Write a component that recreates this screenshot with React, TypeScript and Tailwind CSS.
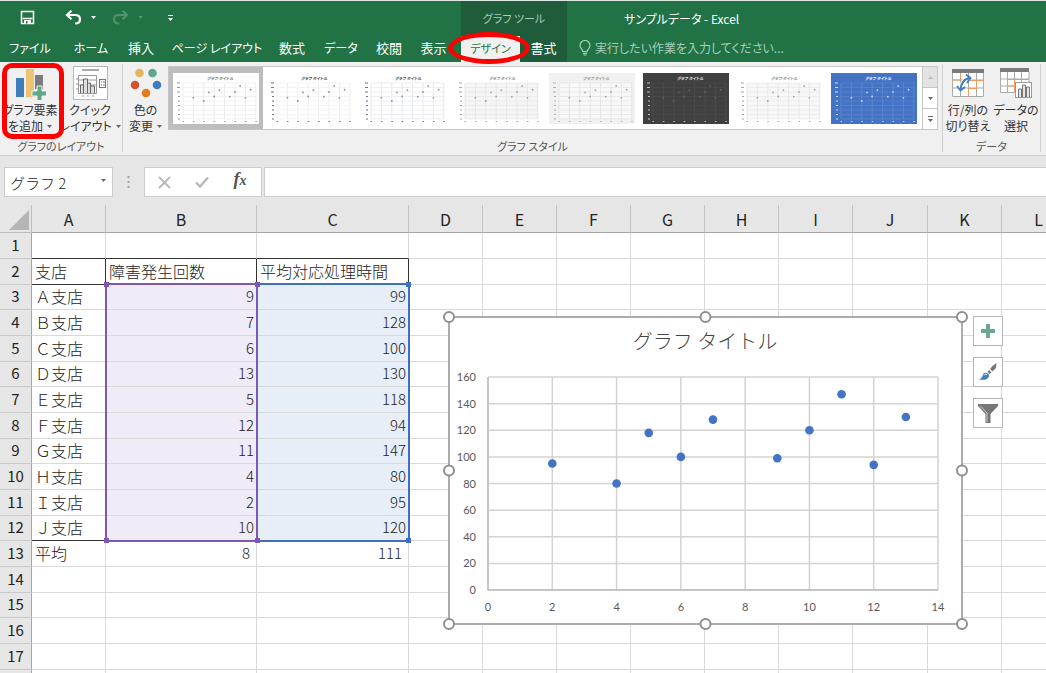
import React from "react";

const branches: [string, number, number][] = [
  ["Ａ支店", 9, 99],
  ["Ｂ支店", 7, 128],
  ["Ｃ支店", 6, 100],
  ["Ｄ支店", 13, 130],
  ["Ｅ支店", 5, 118],
  ["Ｆ支店", 12, 94],
  ["Ｇ支店", 11, 147],
  ["Ｈ支店", 4, 80],
  ["Ｉ支店", 2, 95],
  ["Ｊ支店", 10, 120],
];

const columns = [
  { name: "A", width: "w-[74px]" },
  { name: "B", width: "w-[151px]" },
  { name: "C", width: "w-[152px]" },
  { name: "D", width: "w-[74px]" },
  { name: "E", width: "w-[74px]" },
  { name: "F", width: "w-[74px]" },
  { name: "G", width: "w-[74px]" },
  { name: "H", width: "w-[74px]" },
  { name: "I", width: "w-[74px]" },
  { name: "J", width: "w-[75px]" },
  { name: "K", width: "w-[74px]" },
  { name: "L", width: "w-[74px]" },
];
const rows = Array.from({ length: 17 }, (_, i) => i + 1);

const tabsBefore = [
  { label: "ファイル", style: "w-[60px] text-[12px]" },
  { label: "ホーム", style: "w-[62px] text-[12px]" },
  { label: "挿入", style: "w-[38px] text-[13px]" },
  { label: "ページ レイアウト", style: "w-[114px] text-[12px]" },
  { label: "数式", style: "w-[36px] text-[13px]" },
  { label: "データ", style: "w-[62px] text-[12px]" },
  { label: "校閲", style: "w-[34px] text-[13px]" },
  { label: "表示", style: "w-[55px] text-[13px]" },
];

type ThumbStyle = {
  bg: string;
  plot: string;
  grid: string;
  dot: string;
  text: string;
  selected?: boolean;
};

const thumbs: ThumbStyle[] = [
  { bg: "#ffffff", plot: "#ffffff", grid: "#ececec", dot: "#8b8fa0", text: "#777777", selected: true },
  { bg: "#ffffff", plot: "#ffffff", grid: "#efefef", dot: "#8b8fa0", text: "#444444" },
  { bg: "#ffffff", plot: "#ffffff", grid: "#e6e8f0", dot: "#8f93a8", text: "#3f4666" },
  { bg: "#ffffff", plot: "#f5f5f5", grid: "#e6e6e6", dot: "#a0a0a0", text: "#888888" },
  { bg: "#f1f1f1", plot: "#f8f8f8", grid: "#e4e4e4", dot: "#a0a4b0", text: "#999999" },
  { bg: "#404040", plot: "#404040", grid: "#4a4a4a", dot: "#5c6270", text: "#e8e8e8" },
  { bg: "#ffffff", plot: "#f7f7f7", grid: "#e8e8e8", dot: "#a0a4b0", text: "#888888" },
  { bg: "#4472c4", plot: "#4472c4", grid: "#5b84cd", dot: "#c5d4f0", text: "#ffffff" },
];

function Caret({ className = "" }: { className?: string }) {
  return (
    <svg className={className} width="5" height="3" viewBox="0 0 5 3" aria-hidden="true">
      <path d="M0 0h5L2.5 3z" fill="currentColor" />
    </svg>
  );
}

function StyleThumb({ t, index }: { t: ThumbStyle; index: number }) {
  return (
    <button
      aria-label={`スタイル ${index + 1}`}
      className={`flex w-[94px] shrink-0 items-center justify-center ${t.selected ? "bg-[#bdbdbd]" : "bg-white"}`}
    >
      <svg width="86" height="51" viewBox="0 0 86 51">
        <rect width="86" height="51" fill={t.bg} />
        <rect x="10" y="10" width="73" height="36" fill={t.plot} />
        <g stroke={t.grid} strokeWidth="1">
          {[0, 1, 2, 3, 4, 5, 6, 7, 8].map((i) => (
            <path key={i} d={`M10 ${10 + i * 4.5}H83`} strokeWidth="0.7" />
          ))}
          {[0, 1, 2, 3, 4, 5, 6, 7].map((i) => (
            <path key={i} d={`M${10 + i * 10.4} 10V46`} />
          ))}
        </g>
        <g fill={t.text} opacity="0.75">
          {[0, 1, 2, 3, 4, 5, 6, 7, 8].map((i) => (
            <rect key={i} x={i > 2 ? 5 : 4} y={9.5 + i * 4.5} width={i > 2 ? 2 : 3} height="1" />
          ))}
          {[0, 1, 2, 3, 4, 5, 6, 7].map((i) => (
            <rect key={i} x={9.5 + i * 10.4} y="48" width="1.5" height="1" />
          ))}
        </g>
        <g fill={t.dot}>
          {branches.map(([n, x, y]) => (
            <circle key={n} cx={10 + x * 5.2} cy={46 - y * 0.225} r="0.9" />
          ))}
        </g>
        <text x="47" y="6.5" textAnchor="middle" fontSize="4" fontWeight="700" fontStyle="italic" fill={t.text}>
          グラフ タイトル
        </text>
      </svg>
    </button>
  );
}

function GroupLabel({ children }: { children: React.ReactNode }) {
  return <div className="flex min-h-0 flex-1 items-center justify-center text-[11px] text-[#555]">{children}</div>;
}

function RibbonButton({
  icon,
  first,
  second,
  caret,
  className,
}: {
  icon: React.ReactNode;
  first: string;
  second: string;
  caret?: boolean;
  className: string;
}) {
  return (
    <button className={`flex flex-col items-center whitespace-nowrap text-[12px] leading-4 text-[#333] ${className}`}>
      <span className="flex h-[38px] items-center justify-center">{icon}</span>
      <span>{first}</span>
      <span className="flex items-center gap-1">
        {second}
        {caret && <Caret className="text-[#666]" />}
      </span>
    </button>
  );
}

const AddElementIcon = () => (
  <svg width="32" height="34" viewBox="0 0 32 34">
    <rect x="2" y="12" width="8" height="19" fill="#3f7dbd" />
    <rect x="12" y="3" width="8" height="28" fill="#eec373" />
    <rect x="21" y="9" width="8" height="14" fill="#7b7b7b" />
    <path d="M23 20h5v5h5v5h-5v5h-5v-5h-5v-5h5z" fill="#5fa88b" stroke="#f0f0f0" />
  </svg>
);

const QuickLayoutIcon = () => (
  <svg width="35" height="34" viewBox="0 0 35 34" fill="none">
    <rect x="0.5" y="0.5" width="34" height="33" fill="#fff" stroke="#b5b5b5" />
    <path d="M9 4h17" stroke="#aaa" strokeWidth="2" />
    <path d="M5.5 9.5h18v18h-18zM3 13h2M3 18h2M3 23h2M5.5 14h18M5.5 19h18" stroke="#999" />
    <path d="M7.500 27v-8h3v8M10.500 27V13h4v14M14.500 27V17h3v10M17.500 27V20h4v7" stroke="#666" fill="#ddd" />
    <rect x="26.500" y="13.500" width="6" height="8" stroke="#777" />
    <path d="M28 16h1M30 16h2M28 19h1M30 19h2" stroke="#777" />
    <path d="M9 30h2M14 30h2M19 30h2" stroke="#999" />
  </svg>
);

const ColorsIcon = () => (
  <svg width="32" height="32" viewBox="0 0 32 32">
    <circle cx="9.500" cy="6" r="4.300" fill="#e3b55d" />
    <circle cx="22.500" cy="6" r="4.300" fill="#5fa88b" />
    <circle cx="5" cy="18" r="4.300" fill="#d35230" />
    <circle cx="27" cy="18" r="4.300" fill="#3f7dbd" />
    <circle cx="16" cy="26" r="4.300" fill="#e07b1f" />
  </svg>
);

const SwapIcon = () => (
  <svg width="34" height="30" viewBox="0 0 34 30" fill="none">
    <rect x="1" y="1" width="32" height="28" fill="#fff" />
    <path d="M1.500 5v23.500h31V5M1 12h32M1 20h32M9.500 5v23M17.500 5v23M25.500 5v23" stroke="#aaa" />
    <path d="M9.500 5v7h-8M17.500 20.500h8v-8h7M17.500 12.500h8M17.500 20.500v8" stroke="#ed9a5b" />
    <rect x="1" y="1" width="32" height="4" fill="#7b7b7b" />
    <path d="M9 23c0-6 3-11 10-12" stroke="#fff" strokeWidth="4" />
    <path d="M9.500 22c0-6 3.500-11 9-12" stroke="#3f7dbd" strokeWidth="2" />
    <path d="M6 18l3.500 4.500L14 19M15 6.500l4.500 3.500-3.500 5" stroke="#3f7dbd" strokeWidth="1.800" />
  </svg>
);

const SelectDataIcon = () => (
  <svg width="34" height="32" viewBox="0 0 34 32" fill="none">
    <rect x="1" y="1" width="29" height="25" fill="#fff" />
    <path d="M1.500 5v20.500h28.500V5M1 12h29M1 19h29M8.500 5v20M15.500 5v20M22.500 5v20" stroke="#aaa" />
    <path d="M8.500 25V12.500h21M15.500 12v13M8.500 19h14M22.500 5v13" stroke="#ed9a5b" />
    <rect x="1" y="1" width="29" height="4" fill="#7b7b7b" />
    <rect x="16.500" y="15.500" width="16" height="15" fill="#fff" stroke="#999" />
    <path d="M19.500 30v-8h3v8M23.500 30V18h3v12M27.500 30V20h3v10" stroke="#777" fill="#e5e5e5" />
  </svg>
);

function TitleBar() {
  return (
    <header className="shrink-0 border-t border-[#dbe9e0] bg-[#217346] text-white">
      <div className="flex h-[35px]">
        <div className="flex w-[461px] shrink-0 items-center pb-[2px] pl-[20px]">
          <button aria-label="上書き保存">
            <svg width="15" height="15" viewBox="0 0 15 15" fill="none">
              <path d="M1.500 1.500h12v12h-12z" stroke="#fff" strokeWidth="1.500" />
              <path d="M2.500 8.500h10" stroke="#fff" strokeWidth="1.500" />
              <path d="M4 10h7v4H4z" fill="#fff" />
              <path d="M6 11h1.500v2.500H6z" fill="#217346" />
            </svg>
          </button>
          <button aria-label="元に戻す" className="ml-[30px]">
            <svg width="17" height="15" viewBox="0 0 17 15" fill="none" stroke="#fff" strokeWidth="2.200">
              <path d="M6.500 0.800L2 5l4.500 4.200M2 5h8c3.500 0 5 2 5 4.200C15 12 13 13.500 10 13.500" />
            </svg>
          </button>
          <Caret className="ml-[9px]" />
          <button aria-label="やり直し" className="ml-[16px] text-[#4f9470]">
            <svg width="17" height="15" viewBox="0 0 17 15" fill="none" stroke="currentColor" strokeWidth="2">
              <path d="M10.500 0.800L15 5l-4.500 4.200M15 5H7C3.500 5 2 7 2 9.200 2 12 4 13.500 7 13.500" />
            </svg>
          </button>
          <Caret className="ml-[9px] text-[#4f9470]" />
          <button aria-label="クイック アクセス ツール バーのカスタマイズ" className="ml-[25px]">
            <svg width="5" height="6" viewBox="0 0 5 6">
              <path d="M0 0h5v1H0zM0 3h5L2.500 6z" fill="#fff" />
            </svg>
          </button>
        </div>
        <div className="flex w-[106px] shrink-0 items-center justify-center bg-[#1e5c3a] text-[11px] text-[#a9cdb8]">
          グラフ ツール
        </div>
        <h1 className="flex items-center pl-[57px] text-[12px] whitespace-nowrap">サンプルデータ - Excel</h1>
      </div>
      <nav className="flex h-[26px] whitespace-nowrap">
        {tabsBefore.map((t) => (
          <button key={t.label} className={`shrink-0 pb-[2px] ${t.style}`}>
            {t.label}
          </button>
        ))}
        <div className="relative flex w-[59px] shrink-0">
          <button className="flex-1 bg-[#f0f0f0] pb-[2px] text-[11px] text-[#217346]">デザイン</button>
          <div className="pointer-events-none absolute -top-[4px] -left-[13px] h-[32px] w-[82px] rounded-[50%] border-[5px] border-[#ff0000]" />
        </div>
        <button className="w-[47px] shrink-0 bg-[#1e5c3a] pb-[2px] text-[13px]">書式</button>
        <label className="flex flex-1 items-center gap-1 pb-[2px] pl-3 text-[12px] text-[#a9cdb8]">
          <svg width="12" height="16" viewBox="0 0 12 16" fill="none" stroke="currentColor" strokeWidth="1.200">
            <path d="M3.800 11.500C3.800 9 1 8.500 1 5.500a5 5 0 0 1 10 0c0 3-2.800 3.500-2.800 6zM4 13.300h4M4.500 15h3" />
          </svg>
          <input
            aria-label="操作アシスト"
            placeholder="実行したい作業を入力してください..."
            className="w-60 bg-transparent outline-none placeholder:text-[#a9cdb8]"
          />
        </label>
      </nav>
    </header>
  );
}

function Ribbon() {
  return (
    <section className="flex h-[94px] shrink-0 overflow-hidden border-b border-[#d2d2d2] bg-[#f0f0f0] pt-[2px]">
      <div className="flex w-[122px] shrink-0 flex-col">
        <div className="flex h-[73px] shrink-0">
          <div className="relative w-[60px] shrink-0">
            <RibbonButton icon={<AddElementIcon />} first="グラフ要素" second="を追加" caret className="w-[60px]" />
            <div className="pointer-events-none absolute -top-px left-[2px] h-[76px] w-[62px] rounded-[10px] border-[5px] border-[#ff0000]" />
          </div>
          <RibbonButton icon={<QuickLayoutIcon />} first="クイック" second="レイアウト" caret className="w-[60px]" />
        </div>
        <GroupLabel>グラフのレイアウト</GroupLabel>
      </div>
      <div className="mb-[3px] w-px bg-[#d0d0d0]" />
      <div className="flex min-w-0 flex-1 flex-col">
        <div className="flex h-[73px] shrink-0">
          <RibbonButton icon={<ColorsIcon />} first="色の" second="変更" caret className="w-[45px] shrink-0" />
          <div className="mt-[2px] mr-[4px] flex h-[64px] min-w-0 flex-1 border border-[#c6c6c6] bg-white">
            <div className="flex flex-1 overflow-hidden">
              {thumbs.map((t, i) => (
                <StyleThumb key={i} t={t} index={i} />
              ))}
            </div>
            <div className="flex w-[15px] shrink-0 flex-col divide-y divide-[#c6c6c6] border-l border-[#c6c6c6] text-[#666]">
              <button aria-label="上へ" className="flex flex-1 items-center justify-center bg-[#e3e3e3] text-[#bbb]">
                <Caret className="rotate-180" />
              </button>
              <button aria-label="下へ" className="flex flex-1 items-center justify-center">
                <Caret />
              </button>
              <button aria-label="その他" className="flex flex-1 items-center justify-center">
                <svg width="5" height="6" viewBox="0 0 5 6">
                  <path d="M0 0h5v1H0zM0 3h5L2.500 6z" fill="currentColor" />
                </svg>
              </button>
            </div>
          </div>
        </div>
        <GroupLabel>グラフ スタイル</GroupLabel>
      </div>
      <div className="mb-[3px] w-px bg-[#d0d0d0]" />
      <div className="flex w-[97px] shrink-0 flex-col">
        <div className="flex h-[73px] shrink-0">
          <RibbonButton icon={<SwapIcon />} first="行/列の" second="切り替え" className="w-[50px]" />
          <RibbonButton icon={<SelectDataIcon />} first="データの" second="選択" className="w-[46px]" />
        </div>
        <GroupLabel>データ</GroupLabel>
      </div>
      <div className="mr-[5px] mb-[3px] w-px bg-[#d0d0d0]" />
    </section>
  );
}

function FormulaBar() {
  return (
    <section className="flex h-[49px] shrink-0 items-center bg-[#e6e6e6] pt-[3px] pl-[4px] text-[#444]">
      <div className="relative h-[30px] w-[109px] shrink-0">
        <select
          aria-label="名前ボックス"
          className="h-full w-full appearance-none border border-[#cdcdcd] bg-white pt-[2px] pl-[5px] text-[15px] font-light text-[#222]"
        >
          <option>グラフ 2</option>
        </select>
        <Caret className="pointer-events-none absolute top-[12px] right-[7px] text-[#666]" />
      </div>
      <svg className="mx-[14px] shrink-0" width="3" height="12" viewBox="0 0 3 12" fill="#a0a0a0">
        <path d="M0.500 0h2v2h-2zM0.500 5h2v2h-2zM0.500 10h2v2h-2z" />
      </svg>
      <div className="flex h-[30px] w-[118px] shrink-0 items-center border border-[#cdcdcd] bg-white">
        <button aria-label="キャンセル" className="flex w-[38px] justify-center">
          <svg width="13" height="13" viewBox="0 0 13 13" stroke="#b8b8b8" strokeWidth="1.800">
            <path d="M1 1l11 11M12 1L1 12" />
          </svg>
        </button>
        <button aria-label="入力" className="flex w-[38px] justify-center">
          <svg width="14" height="12" viewBox="0 0 14 12" fill="none" stroke="#b8b8b8" strokeWidth="2.400">
            <path d="M1 6.500l4 4L13 1.500" />
          </svg>
        </button>
        <button
          aria-label="関数の挿入"
          className="w-[38px] pb-1 font-['Liberation_Serif',serif] text-[18px] leading-5 font-bold text-[#555] italic"
        >
          f<span className="text-[14px]">x</span>
        </button>
      </div>
      <input
        aria-label="数式バー"
        className="ml-[2px] h-[30px] min-w-0 flex-1 border border-r-0 border-[#cdcdcd] bg-white px-2 outline-none"
      />
    </section>
  );
}

function cellContent(row: number, col: string): string {
  if (row === 2) return ({ A: "支店", B: "障害発生回数", C: "平均対応処理時間" } as Record<string, string>)[col] ?? "";
  if (row === 13) return ({ A: "平均", B: "8", C: "111" } as Record<string, string>)[col] ?? "";
  const record = branches[row - 3];
  if (!record) return "";
  if (col === "A") return record[0];
  if (col === "B") return String(record[1]);
  if (col === "C") return String(record[2]);
  return "";
}

function cellClass(row: number, col: string): string {
  const table = col === "A" || col === "B" || col === "C";
  const right = table && row === 2 ? "border-r-[#333]" : "border-r-[#d9d9d9]";
  const bottom =
    (table && (row === 1 || row === 2)) || (col === "A" && row === 12) ? "border-b-[#333]" : "border-b-[#d9d9d9]";
  const numeric = (col === "B" || col === "C") && row > 2;
  const align = numeric
    ? `text-right text-[15px] ${row === 13 ? "pr-[6px]" : "pr-[2px]"}`
    : "pl-[3px] text-left text-[16px]";
  const inRange = row > 2 && row < 13;
  const fill = inRange && col === "B" ? "bg-[#f0ecf7]" : inRange && col === "C" ? "bg-[#e7eef8]" : "";
  return `${right} ${bottom} ${align} ${fill}`;
}

function ScatterChart() {
  const px = (x: number) => 40 + (x * 450) / 14;
  const py = (y: number) => 274 - (y * 213) / 160;
  return (
    <div className="absolute top-[111px] left-[448px] h-[309px] w-[515px] border-2 border-[#acacac] bg-white">
      <svg className="-m-[2px]" width="515" height="309" viewBox="0 0 515 309" role="img" aria-label="散布図">
        <g stroke="#d3d3d3" strokeWidth="1.500">
          {[0, 20, 40, 60, 80, 100, 120, 140, 160].map((v) => (
            <path key={v} d={`M40 ${py(v)}H490`} />
          ))}
          {[0, 2, 4, 6, 8, 10, 12, 14].map((v) => (
            <path key={v} d={`M${px(v)} 61V274`} />
          ))}
        </g>
        <path d="M40 61V274H490" fill="none" stroke="#bdbdbd" strokeWidth="1.500" />
        <g className="font-['Lato','Noto_Sans_CJK_JP',sans-serif] text-[11px]" fill="#595959">
          {[0, 20, 40, 60, 80, 100, 120, 140, 160].map((v) => (
            <text key={v} x="28" y={py(v) + 4} textAnchor="end">
              {v}
            </text>
          ))}
          {[0, 2, 4, 6, 8, 10, 12, 14].map((v) => (
            <text key={v} x={px(v)} y="295" textAnchor="middle">
              {v}
            </text>
          ))}
        </g>
        <text x="257" y="33" textAnchor="middle" className="text-[20px] font-light" fill="#444444">
          グラフ タイトル
        </text>
        <g fill="#4472c4">
          {branches.map(([n, x, y]) => (
            <circle key={n} cx={px(x)} cy={py(y)} r="4.300" />
          ))}
        </g>
      </svg>
      <svg className="absolute -top-[8px] -left-[8px]" width="527" height="321" viewBox="0 0 527 321">
        <g fill="#fff" stroke="#8f8f8f" strokeWidth="2">
          {[7, 263.5, 520].flatMap((x) =>
            [7, 160.5, 314].map((y) =>
              x === 263.5 && y === 160.5 ? null : <circle key={`${x}-${y}`} cx={x} cy={y} r="5" />,
            ),
          )}
        </g>
      </svg>
    </div>
  );
}

function ChartTools() {
  const box = "flex h-[30px] w-[30px] items-center justify-center border border-[#b5b5b5] bg-white";
  return (
    <div className="absolute top-[111px] left-[973px] flex flex-col gap-[11px]">
      <button aria-label="グラフ要素" className={box}>
        <svg width="16" height="16" viewBox="0 0 16 16">
          <path d="M6 1h4v5h5v4h-5v5H6v-5H1V6h5z" fill="#6aa88f" />
        </svg>
      </button>
      <button aria-label="グラフ スタイル" className={box}>
        <svg width="20" height="20" viewBox="0 0 20 20" fill="none">
          <path d="M18.500 1L18 6l-3.500 3.500-2.500-2.500L15 3.500z" fill="#777" />
          <path d="M11 8l2.500 2.500-2 1.500L9.500 10z" fill="#777" />
          <path d="M9 11c-3-1-4 1-4.500 3S2 17 1 17.500c4 .8 10 .5 10-4 0-1-1-2-2-2.500z" fill="#3f7dbd" />
          <path d="M6 13.500c1-2 2.500-1.500 3-.5" stroke="#fff" />
        </svg>
      </button>
      <button aria-label="グラフ フィルター" className={box}>
        <svg width="22" height="21" viewBox="0 0 22 21">
          <path d="M1 1h20v2l-7.500 8v9h-5v-9L1 3z" fill="#777" />
          <path d="M3.500 3L10 10v9" stroke="#ccc" fill="none" />
        </svg>
      </button>
    </div>
  );
}

function RangeHandle({ className }: { className: string }) {
  return <span className={`absolute h-[5px] w-[5px] ${className}`} />;
}

function Sheet() {
  return (
    <main className="relative min-h-0 flex-1 overflow-hidden bg-white">
      <table className="w-[1076px] table-fixed border-separate border-spacing-0 text-[#222]">
        <colgroup>
          <col className="w-[32px]" />
          {columns.map((c) => (
            <col key={c.name} className={c.width} />
          ))}
        </colgroup>
        <thead>
          <tr className="h-[28px]">
            <th aria-label="すべて選択" className="border-r border-b border-[#bdbdbd] bg-[#e6e6e6] p-0">
              <svg className="mt-[2px] ml-[9px]" width="20" height="20" viewBox="0 0 20 20" aria-hidden="true">
                <path d="M20 0v20H0z" fill="#b5b5b5" />
              </svg>
            </th>
            {columns.map((c) => (
              <th
                key={c.name}
                scope="col"
                className="border-r border-b border-r-[#c4c4c4] border-b-[#a6a6a6] bg-[#e6e6e6] p-0 pt-px text-[16px] leading-5 font-normal"
              >
                {c.name}
              </th>
            ))}
          </tr>
        </thead>
        <tbody>
          {rows.map((r) => (
            <tr key={r} className={r % 3 === 0 ? "h-[25px]" : "h-[26px]"}>
              <th
                scope="row"
                className="border-r border-b border-r-[#a6a6a6] border-b-[#c9c9c9] bg-[#e6e6e6] p-0 pb-[2px] text-center text-[15px] leading-5 font-normal"
              >
                {r}
              </th>
              {columns.map((c) => (
                <td
                  key={c.name}
                  className={`border-r border-b p-0 pb-[2px] leading-5 font-light whitespace-nowrap ${cellClass(r, c.name)}`}
                >
                  {cellContent(r, c.name)}
                </td>
              ))}
            </tr>
          ))}
          <tr className="h-[26px]" aria-hidden="true">
            <td className="border-r border-[#a6a6a6] bg-[#e6e6e6] p-0" />
            {columns.map((c) => (
              <td key={c.name} className="border-r border-[#d9d9d9] p-0" />
            ))}
          </tr>
        </tbody>
      </table>
      <div className="pointer-events-none absolute top-[78px] left-[105px] h-[259px] w-[153px] border-2 border-[#7e57b5]">
        <RangeHandle className="-top-[3px] -left-[3px] bg-[#7e57b5]" />
        <RangeHandle className="-bottom-[3px] -left-[3px] bg-[#7e57b5]" />
      </div>
      <div className="pointer-events-none absolute top-[78px] left-[256px] h-[259px] w-[154px] border-2 border-l-0 border-[#3f6fc0]">
        <div className="absolute inset-y-0 left-0 w-[2px] bg-[#7e57b5]" />
        <RangeHandle className="-top-[3px] -left-px bg-[#7e57b5]" />
        <RangeHandle className="-bottom-[3px] -left-px bg-[#7e57b5]" />
        <RangeHandle className="-top-[3px] -right-[3px] bg-[#3f6fc0]" />
        <RangeHandle className="-right-[3px] -bottom-[3px] bg-[#3f6fc0]" />
      </div>
      <ScatterChart />
      <ChartTools />
    </main>
  );
}

export default function App() {
  return (
    <div className="flex h-screen flex-col overflow-hidden bg-white font-['Noto_Sans_CJK_JP',sans-serif]">
      <div className="shrink-0 [font-feature-settings:'palt']">
        <TitleBar />
        <Ribbon />
      </div>
      <FormulaBar />
      <Sheet />
    </div>
  );
}
